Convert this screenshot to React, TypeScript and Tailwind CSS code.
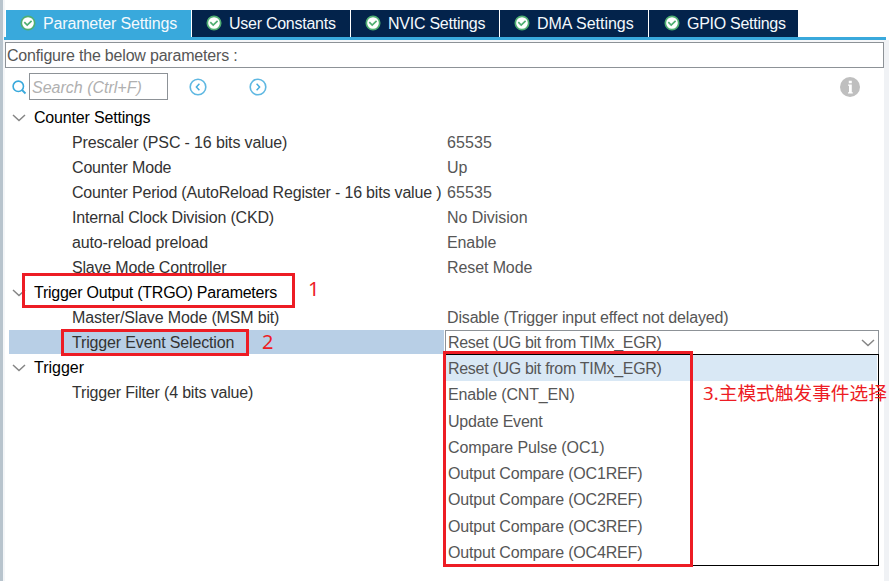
import type { ReactNode } from "react";

type TabItem = { label: string; tab: string; text: string };

const tabs: TabItem[] = [
  { label: "Parameter Settings", tab: "w-[185px] bg-[#39a9dc] pl-[14px]", text: "tracking-[-0.16px]" },
  { label: "User Constants", tab: "w-[158px] bg-[#03234b] pl-[14px]", text: "tracking-[-0.26px]" },
  { label: "NVIC Settings", tab: "w-[148px] bg-[#03234b] pl-[14px]", text: "tracking-[-0.25px]" },
  { label: "DMA Settings", tab: "w-[148px] bg-[#03234b] pl-[14px]", text: "tracking-[-0.02px]" },
  { label: "GPIO Settings", tab: "w-[149px] bg-[#03234b] pl-[15px]", text: "tracking-[-0.28px]" },
];

type Row = {
  kind: "group" | "param" | "selected";
  label: string;
  text: string;
  value?: string;
  valueText?: string;
};

const rows: Row[] = [
  { kind: "group", label: "Counter Settings", text: "tracking-[-0.18px]" },
  { kind: "param", label: "Prescaler (PSC - 16 bits value)", text: "tracking-[-0.14px]", value: "65535", valueText: "tracking-[0.1px]" },
  { kind: "param", label: "Counter Mode", text: "tracking-[-0.17px]", value: "Up" },
  { kind: "param", label: "Counter Period (AutoReload Register - 16 bits value )", text: "tracking-[-0.18px]", value: "65535", valueText: "tracking-[0.1px]" },
  { kind: "param", label: "Internal Clock Division (CKD)", text: "tracking-[-0.18px]", value: "No Division", valueText: "tracking-[-0.03px]" },
  { kind: "param", label: "auto-reload preload", text: "tracking-[-0.15px]", value: "Enable", valueText: "tracking-[-0.1px]" },
  { kind: "param", label: "Slave Mode Controller", text: "tracking-[-0.19px]", value: "Reset Mode", valueText: "tracking-[-0.1px]" },
  { kind: "group", label: "Trigger Output (TRGO) Parameters", text: "tracking-[-0.25px]" },
  { kind: "param", label: "Master/Slave Mode (MSM bit)", text: "tracking-[-0.16px]", value: "Disable (Trigger input effect not delayed)", valueText: "tracking-[-0.16px]" },
  { kind: "selected", label: "Trigger Event Selection", text: "tracking-[-0.15px]", value: "Reset (UG bit from TIMx_EGR)", valueText: "tracking-[-0.3px]" },
  { kind: "group", label: "Trigger", text: "tracking-normal" },
  { kind: "param", label: "Trigger Filter (4 bits value)", text: "tracking-[-0.17px]" },
];

const options = [
  { label: "Reset (UG bit from TIMx_EGR)", text: "mr-px h-[26px] bg-[#d9e8f5] leading-[28px] tracking-[-0.3px]" },
  { label: "Enable (CNT_EN)", text: "h-[26px] leading-[28px] tracking-[-0.15px]" },
  { label: "Update Event", text: "h-[27px] leading-[30px] tracking-[-0.2px]" },
  { label: "Compare Pulse (OC1)", text: "h-[26px] leading-[28px] tracking-[-0.1px]" },
  { label: "Output Compare (OC1REF)", text: "h-[26px] leading-[28px] tracking-[-0.17px]" },
  { label: "Output Compare (OC2REF)", text: "h-[26px] leading-[28px] tracking-[-0.17px]" },
  { label: "Output Compare (OC3REF)", text: "h-[27px] leading-[30px] tracking-[-0.17px]" },
  { label: "Output Compare (OC4REF)", text: "h-[26px] leading-[28px] tracking-[-0.17px]" },
];

function CheckIcon() {
  return (
    <svg width="16" height="16" viewBox="0 0 16 16" className="-mt-px shrink-0">
      <circle cx="8" cy="8" r="6.7" fill="#fff" stroke="#4fae72" strokeWidth="1.7" />
      <path d="M4.3 7.2 L7.2 10 L11.6 5.8" fill="none" stroke="#4fae72" strokeWidth="1.7" />
    </svg>
  );
}

function Chevron() {
  return (
    <svg width="14" height="8" viewBox="0 0 14 8" className="shrink-0">
      <path d="M1 1 L7 6.5 L13 1" fill="none" stroke="#858585" strokeWidth="1.5" />
    </svg>
  );
}

function RoundArrow({ d }: { d: string }) {
  return (
    <svg width="18" height="18" viewBox="0 0 18 18" className="shrink-0">
      <circle cx="9" cy="9" r="7.8" fill="none" stroke="#5fb8e2" strokeWidth="1.6" />
      <path d={d} fill="none" stroke="#45acdd" strokeWidth="1.5" />
    </svg>
  );
}

function TreeRow({ row }: { row: Row }) {
  if (row.kind === "group") {
    return (
      <div className="flex h-[25px] items-center pl-[7px] text-black">
        <Chevron />
        <span className={`pl-[8px] ${row.text}`}>{row.label}</span>
      </div>
    );
  }
  if (row.kind === "selected") {
    return (
      <div className="flex h-[25px] items-start pl-[4px]">
        <div className={`h-[24px] w-[435px] bg-[#b8cfe6] pl-[63px] ${row.text}`}>{row.label}</div>
        <div className="ml-px flex h-[24px] w-[434px] items-center justify-between border border-b-0 border-[#8d9297] bg-white pl-[2px] pr-[3px] text-[#565656]">
          <span className={row.valueText}>{row.value}</span>
          <Chevron />
        </div>
      </div>
    );
  }
  return (
    <div className="flex h-[25px] items-center pl-[67px]">
      <span className={`w-[375px] ${row.text}`}>{row.label}</span>
      <span className={`text-[#565656] ${row.valueText ?? ""}`}>{row.value}</span>
    </div>
  );
}

function Note({ className, children }: { className: string; children?: ReactNode }) {
  return (
    <div className={`absolute whitespace-nowrap font-['Noto_Sans','Noto_Sans_CJK_SC',sans-serif] text-[#ed1c24] ${className}`}>
      {children}
    </div>
  );
}

export default function App() {
  return (
    <div className="relative flex h-[581px] w-[889px] overflow-hidden whitespace-nowrap bg-white font-['Liberation_Sans',Arial,sans-serif] text-[16px] leading-[25px] text-[#333]">
      <div className="w-[3px] shrink-0 bg-[#b8c4cd]" />
      <div className="w-[2px] shrink-0 bg-[#f4f6f8]" />
      <main className="z-0 flex w-[879px] shrink-0 flex-col pt-[10px]">
        <nav className="flex h-[27px] gap-px pl-px text-[#f4f9fd]">
          {tabs.map((t) => (
            <div key={t.label} className={`flex shrink-0 items-center gap-[7px] ${t.tab}`}>
              <CheckIcon />
              <span className={t.text}>{t.label}</span>
            </div>
          ))}
        </nav>
        <div className="-ml-px h-[3px] w-[882px] shrink-0 bg-[#39a9dc]" />
        <div className="h-[2px] shrink-0 bg-[#f6f7f9]" />
        <div className="h-[26px] shrink-0 border border-[#8d9297] pl-px tracking-[-0.19px] text-[#565656]">
          Configure the below parameters :
        </div>
        <div className="flex h-[37px] shrink-0 items-center pl-[6px]">
          <svg width="16" height="16" viewBox="0 0 16 16" className="shrink-0">
            <circle cx="7.3" cy="7.3" r="5.2" fill="none" stroke="#39a9dc" strokeWidth="1.6" />
            <path d="M11 11 L14.5 14.5" stroke="#39a9dc" strokeWidth="1.8" />
          </svg>
          <div className="ml-[2px] h-[27px] w-[139px] border border-[#8d9297] pl-[2px] italic leading-[27px] text-[#b0b0b0]">
            Search (Ctrl+F)
          </div>
          <div className="ml-[21px] flex gap-[42px]">
            <RoundArrow d="M10.4 5.8 L7.4 9 L10.4 12.2" />
            <RoundArrow d="M7.6 5.8 L10.6 9 L7.6 12.2" />
          </div>
          <svg width="20" height="20" viewBox="0 0 20 20" className="ml-auto mr-[24px]">
            <circle cx="10" cy="10" r="10" fill="#bfbfbf" />
            <path d="M8.8 3.8h3v2.4h-3z M8 7.6h3.8v7.6h1v1.3H8v-1.3h1V8.8H8z" fill="#fff" />
          </svg>
        </div>
        <div className="flex flex-col">
          {rows.map((r) => (
            <TreeRow key={r.label} row={r} />
          ))}
        </div>
      </main>
      <div className="mt-[40px] flex-1 bg-[#f0f2f5]" />

      <div className="absolute left-[445px] top-[354px] flex h-[212px] w-[434px] flex-col border border-black bg-white text-[#565656]">
        {options.map((o) => (
          <div key={o.label} className={`shrink-0 pl-[2px] ${o.text}`}>
            {o.label}
          </div>
        ))}
      </div>

      <Note className="left-[22px] top-[273px] h-[35px] w-[273px] border-[3px] border-[#ed1c24]" />
      <Note className="left-[61px] top-[329px] h-[27px] w-[188px] border-[3px] border-[#ed1c24]" />
      <Note className="left-[443px] top-[351px] h-[216px] w-[250px] border-[3px] border-[#ed1c24]" />
      <Note className="left-[308px] top-[276px] text-[20px]">1</Note>
      <Note className="left-[262px] top-[329px] text-[20px]">2</Note>
      <Note className="left-[703px] top-[380px] text-[18.7px]">3.主模式触发事件选择</Note>
    </div>
  );
}
